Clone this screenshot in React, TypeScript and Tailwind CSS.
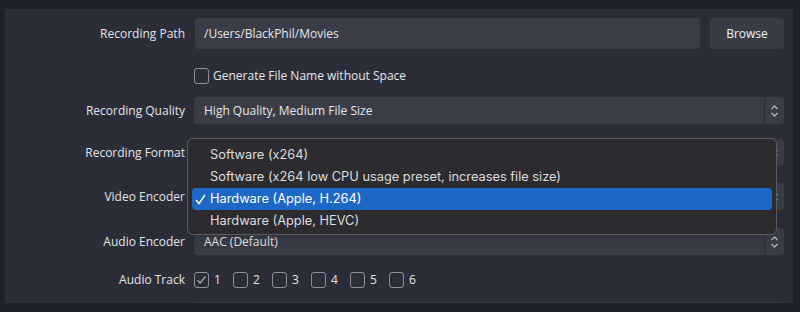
import { ReactNode } from "react";

const labelFont = { fontFamily: '"Open Sans", "Noto Sans", sans-serif' };

const Spinner = () => (
  <div className="flex h-full w-[20px] items-center justify-center border-l border-[#2b2e38]">
    <svg width="9" height="14" viewBox="0 0 9 14" fill="none" stroke="#b4b6bd" strokeWidth="1.3">
      <path d="M1.5 5 L4.5 2 L7.5 5" />
      <path d="M1.5 9 L4.5 12 L7.5 9" />
    </svg>
  </div>
);

const Row = ({ label, className, children }: { label: string; className: string; children: ReactNode }) => (
  <div className={"flex items-center " + className}>
    <div className="w-[180px] shrink-0 text-right text-[12px] text-[#e2e3e7]">{label}</div>
    <div className="ml-[9px] flex h-full flex-1 items-center">{children}</div>
  </div>
);

const Select = ({ value }: { value: string }) => (
  <div className="flex h-full flex-1 items-center overflow-hidden rounded-[4px] bg-[#3a3d48]">
    <div className="flex-1 pl-[10px] text-[12px] text-[#e4e5e8]">{value}</div>
    <Spinner />
  </div>
);

const Box = ({ checked }: { checked?: boolean }) => (
  <div className="flex h-[16px] w-[15px] items-center justify-center rounded-[3px] border border-[#8d9098]">
    {checked && (
      <svg width="11" height="10" viewBox="0 0 11 10" fill="none" stroke="#a9abb2" strokeWidth="1.3">
        <path d="M1.5 5.2 L4.2 8 L9.5 1.5" />
      </svg>
    )}
  </div>
);

const menuItems = [
  "Software (x264)",
  "Software (x264 low CPU usage preset, increases file size)",
  "Hardware (Apple, H.264)",
  "Hardware (Apple, HEVC)",
];

export default function App() {
  return (
    <div className="h-[312px] w-[800px] bg-[#1f2129] px-[5px] pt-[9px]" style={labelFont}>
      <div className="relative h-[294px] w-[788px] bg-[#2b2e38] pt-[9px] pr-[9px]">
        <Row label="Recording Path" className="h-[31px]">
          <div className="ml-px flex h-full flex-1 items-center rounded-[4px] bg-[#3a3d48] pl-[9px] text-[12px] text-[#e4e5e8]">
            /Users/BlackPhil/Movies
          </div>
          <button className="ml-[10px] h-full w-[74px] rounded-[4px] bg-[#393c47] text-[12px] text-[#eeeff2]">
            Browse
          </button>
        </Row>

        <Row label="" className="mt-[17px] h-[20px]">
          <Box />
          <span className="ml-[4px] text-[12px] text-[#e4e5e8]">Generate File Name without Space</span>
        </Row>

        <Row label="Recording Quality" className="mt-[11px] h-[27px]">
          <Select value="High Quality, Medium File Size" />
        </Row>

        <Row label="Recording Format" className="mt-[15px] h-[27px]">
          <Select value="" />
        </Row>

        <Row label="Video Encoder" className="mt-[17px] h-[27px]">
          <Select value="" />
        </Row>

        <Row label="Audio Encoder" className="mt-[18px] h-[27px]">
          <Select value="AAC (Default)" />
        </Row>

        <Row label="Audio Track" className="mt-[15px] h-[20px]">
          {[1, 2, 3, 4, 5, 6].map((n) => (
            <div key={n} className="flex w-[39px] shrink-0 items-center">
              <Box checked={n === 1} />
              <span className="ml-[5px] text-[12px] text-[#e4e5e8]">{n}</span>
            </div>
          ))}
        </Row>

        <div className="absolute bottom-0 left-[190px] right-[10px] h-px bg-[#3a3d47]" />

        <div
          className="absolute left-[182px] top-[129px] h-[97px] w-[590px] rounded-[6px] border border-[#5b5a5f] bg-[#2c2b2f] px-[4px] pt-[5px] shadow-lg"
          style={{ fontFamily: 'Inter, "Liberation Sans", sans-serif' }}
        >
          {menuItems.map((item, i) => (
            <div
              key={item}
              className={
                "relative flex h-[22px] items-center rounded-[4px] pl-[18px] text-[12.8px] " +
                (i === 2 ? "bg-[#1d68c7] text-white" : "text-[#dddcdf]")
              }
            >
              {i === 2 && (
                <svg className="absolute left-[3px]" width="11" height="11" viewBox="0 0 11 11" fill="none" stroke="white" strokeWidth="1.4">
                  <path d="M1 6 L4 9.5 L10 1" />
                </svg>
              )}
              {item}
            </div>
          ))}
        </div>
      </div>
    </div>
  );
}
